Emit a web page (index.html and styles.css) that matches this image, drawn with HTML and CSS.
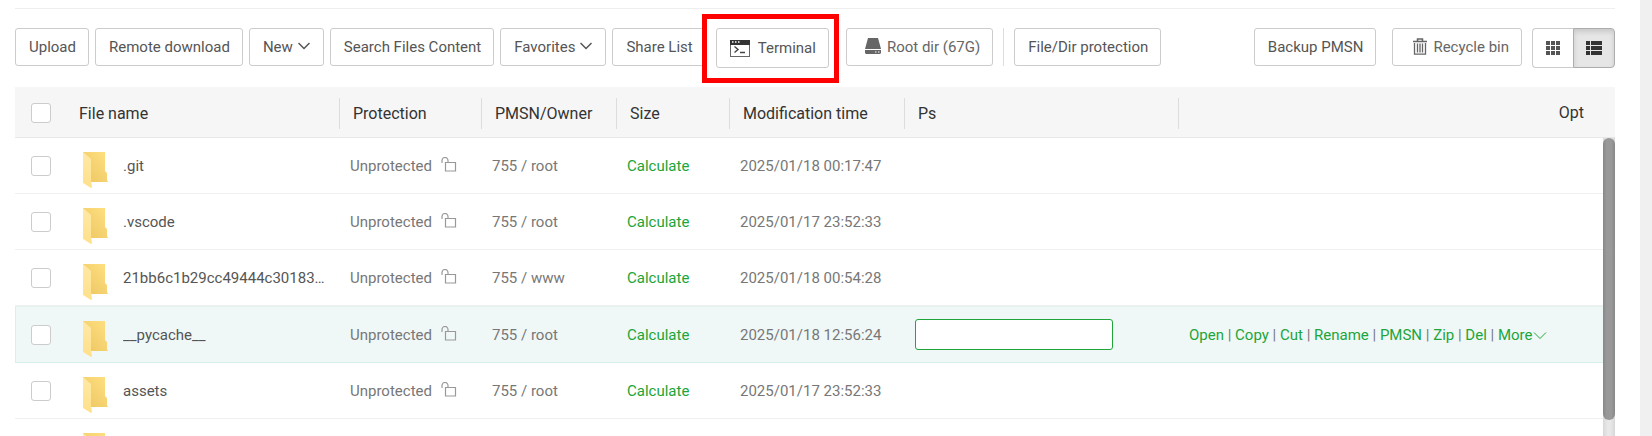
FILE: index.html
```html
<!DOCTYPE html>
<html lang="en">
<head>
<meta charset="utf-8">
<title>Files</title>
<link rel="stylesheet" href="styles.css">
</head>
<body>
<svg class="sprite" aria-hidden="true">
  <defs>
    <linearGradient id="fold-back" x1="0" y1="1" x2="1" y2="0"><stop offset="0" stop-color="#ecc661"/><stop offset="1" stop-color="#ffe082"/></linearGradient>
    <linearGradient id="fold-front" x1="0" y1="0" x2="0" y2="1"><stop offset="0" stop-color="#ffe9a6"/><stop offset="1" stop-color="#ffe08a"/></linearGradient>
    <symbol id="folder" viewBox="0 0 26 38">
      <path d="M0 1h22v19l2 2v7l1 2H8L0 4z" fill="url(#fold-back)"/>
      <path d="M0 1l8 7v22l1 6-1 1-8-5z" fill="url(#fold-front)"/>
    </symbol>
    <symbol id="unlock" viewBox="0 0 16 16">
      <path d="M1 6V3.500a2.500 2.500 0 0 1 6 0V5.500M4.500 5.500h10v8.500h-10z" fill="none" stroke="#999" stroke-width="1.200"/>
    </symbol>
    <symbol id="chevron" viewBox="0 0 12 8">
      <path d="M.5 1L6 6.500 11.500 1" fill="none" stroke="currentColor" stroke-width="1.500"/>
    </symbol>
  </defs>
</svg>
<main class="panel">
  <div class="toolbar">
    <button class="btn">Upload</button>
    <button class="btn">Remote download</button>
    <button class="btn">New <svg class="chevron"><use href="#chevron"/></svg></button>
    <button class="btn">Search Files Content</button>
    <button class="btn">Favorites <svg class="chevron"><use href="#chevron"/></svg></button>
    <button class="btn">Share List</button>
    <div class="callout">
      <button class="btn btn-tall">
        <svg class="icon-term" viewBox="0 0 20 17"><path d="M0 0h20v17H0z" fill="#666"/><path d="M0 0h20v5H0z" fill="#333"/><path d="M1 5h18v11H1z" fill="#fff"/><path d="M2 2h1.500M5 2h1.500M8 2h1.500" stroke="#fff" stroke-width="1.500"/><path d="M4.500 6.500L8 9.500l-3.500 3M10 12.500h5" fill="none" stroke="#444" stroke-width="1.400"/></svg>
        Terminal
      </button>
    </div>
    <button class="btn btn-icon btn-disk">
      <svg class="icon-disk" viewBox="0 0 16 16"><path d="M3 0h10l3 11H0z" fill="#666"/><path d="M0 12h16v3l-1 1H1l-1-1z" fill="#666"/><path d="M10 14h1.500M13 14h1.500" stroke="#fff"/></svg>
      Root dir (67G)
    </button>
    <span class="divider"></span>
    <button class="btn">File/Dir protection</button>
    <div class="tools">
      <button class="btn">Backup PMSN</button>
      <button class="btn btn-icon">
        <svg class="icon-trash" viewBox="0 0 14 17"><path d="M0 3.500h14M4.500 3V1h5v2" fill="none" stroke="#666" stroke-width="1.500"/><path d="M1.500 5v11.200h11V5M4.500 5.500v9M7 5.500v9M9.500 5.500v9" fill="none" stroke="#666" stroke-width="1.300"/></svg>
        Recycle bin
      </button>
      <div class="views">
        <button class="view" aria-label="Grid view"><svg width="14" height="14" viewBox="0 0 14 14"><path d="M0 2h14M0 7h14M0 12h14" stroke="#555" stroke-width="4" stroke-dasharray="4 1"/></svg></button>
        <button class="view view-on" aria-label="List view"><svg width="16" height="14" viewBox="0 0 16 14"><path d="M0 2h4M0 7h4M0 12h4M5 2h11M5 7h11M5 12h11" stroke="#333" stroke-width="4"/></svg></button>
      </div>
    </div>
  </div>

  <table class="files files-head">
    <colgroup><col class="c-check"><col class="c-name"><col class="c-prot"><col class="c-owner"><col class="c-size"><col class="c-time"><col class="c-ps"><col></colgroup>
    <thead>
      <tr>
        <th class="check"><input type="checkbox" aria-label="Select all"></th>
        <th><span class="label">File name</span></th>
        <th><span class="label">Protection</span></th>
        <th><span class="label">PMSN/Owner</span></th>
        <th><span class="label">Size</span></th>
        <th><span class="label">Modification time</span></th>
        <th><span class="label">Ps</span></th>
        <th class="opt">Opt</th>
      </tr>
    </thead>
  </table>

  <div class="body">
    <div class="rows">
      <table class="files">
        <colgroup><col class="c-check"><col class="c-name"><col class="c-prot"><col class="c-owner"><col class="c-size"><col class="c-time"><col class="c-ps"><col></colgroup>
        <tbody>
          <tr>
            <td class="check"><input type="checkbox" aria-label="Select .git"></td>
            <td><div class="name"><svg class="folder"><use href="#folder"/></svg><span class="text">.git</span></div></td>
            <td><div class="prot">Unprotected <svg class="unlock"><use href="#unlock"/></svg></div></td>
            <td>755 / root</td><td><a href="#">Calculate</a></td><td>2025/01/18 00:17:47</td><td></td><td></td>
          </tr>
          <tr>
            <td class="check"><input type="checkbox" aria-label="Select .vscode"></td>
            <td><div class="name"><svg class="folder"><use href="#folder"/></svg><span class="text">.vscode</span></div></td>
            <td><div class="prot">Unprotected <svg class="unlock"><use href="#unlock"/></svg></div></td>
            <td>755 / root</td><td><a href="#">Calculate</a></td><td>2025/01/17 23:52:33</td><td></td><td></td>
          </tr>
          <tr>
            <td class="check"><input type="checkbox" aria-label="Select 21bb6c1b29cc49444c30183"></td>
            <td><div class="name"><svg class="folder"><use href="#folder"/></svg><span class="text">21bb6c1b29cc49444c30183…</span></div></td>
            <td><div class="prot">Unprotected <svg class="unlock"><use href="#unlock"/></svg></div></td>
            <td>755 / www</td><td><a href="#">Calculate</a></td><td>2025/01/18 00:54:28</td><td></td><td></td>
          </tr>
          <tr class="active">
            <td class="check"><input type="checkbox" aria-label="Select __pycache__"></td>
            <td><div class="name"><svg class="folder"><use href="#folder"/></svg><span class="text">__pycache__</span></div></td>
            <td><div class="prot">Unprotected <svg class="unlock"><use href="#unlock"/></svg></div></td>
            <td>755 / root</td><td><a href="#">Calculate</a></td><td>2025/01/18 12:56:24</td>
            <td><input class="note" type="text" aria-label="Ps"></td>
            <td class="actions"><a href="#">Open</a> | <a href="#">Copy</a> | <a href="#">Cut</a> | <a href="#">Rename</a> | <a href="#">PMSN</a> | <a href="#">Zip</a> | <a href="#">Del</a> | <a href="#">More<svg class="more" viewBox="0 0 14 8"><path d="M1 .5l6 6 6-6" fill="none" stroke="currentColor"/></svg></a></td>
          </tr>
          <tr>
            <td class="check"><input type="checkbox" aria-label="Select assets"></td>
            <td><div class="name"><svg class="folder"><use href="#folder"/></svg><span class="text">assets</span></div></td>
            <td><div class="prot">Unprotected <svg class="unlock"><use href="#unlock"/></svg></div></td>
            <td>755 / root</td><td><a href="#">Calculate</a></td><td>2025/01/17 23:52:33</td><td></td><td></td>
          </tr>
          <tr>
            <td class="check"><input type="checkbox" aria-label="Select folder"></td>
            <td><div class="name"><svg class="folder"><use href="#folder"/></svg></div></td>
            <td></td><td></td><td></td><td></td><td></td><td></td>
          </tr>
        </tbody>
      </table>
    </div>
    <div class="track"><div class="thumb"></div></div>
  </div>
</main>
</body>
</html>
```
FILE: styles.css
```css
* { box-sizing: border-box; }
body {
  margin: 0;
  height: 100vh;
  overflow: hidden;
  background: #f0f0f0;
  color: #777;
  font: 15px/20px Roboto, "Liberation Sans", sans-serif;
}
.sprite { position: absolute; width: 0; height: 0; }
.panel {
  height: 100%;
  margin-right: 12px;
  padding: 8px 25px 0 15px;
  background: #fff;
  display: flex;
  flex-direction: column;
}
a { color: #20a53a; text-decoration: none; }

.toolbar {
  flex: none;
  display: flex;
  align-items: flex-start;
  gap: 6px;
  padding: 19px 0;
  border-top: 1px solid #eee;
}
.btn {
  display: flex;
  align-items: center;
  height: 38px;
  padding: 0 12px 0 13px;
  border: 1px solid #ccc;
  border-radius: 3px;
  background: #fff;
  color: #555;
  font: inherit;
  white-space: nowrap;
}
.btn-tall { height: 40px; }
.btn-icon { padding-left: 18px; color: #666; }
.btn-disk { margin-left: 11px; }
.chevron { width: 12px; height: 8px; margin: 0 1px 3px 5px; }
.icon-term { width: 20px; height: 17px; margin-right: 8px; }
.icon-disk { width: 16px; height: 16px; margin: 0 6px 3px 0; }
.icon-trash { width: 14px; height: 17px; margin: 0 6px 2px 2px; }
.callout { position: relative; margin-left: 4px; }
.callout::after {
  content: "";
  position: absolute;
  inset: -14px -10px -15px -14px;
  border: 5px solid #f00;
  pointer-events: none;
}
.divider { width: 1px; height: 38px; margin: 0 4px; background: #ddd; }
.tools { display: flex; gap: 16px; margin-left: auto; }
.views { display: flex; margin-left: -6px; }
.view {
  width: 41px;
  height: 40px;
  display: flex;
  align-items: center;
  justify-content: center;
  padding: 0;
  border: 1px solid #ccc;
  border-right: 0;
  border-radius: 4px 0 0 4px;
  background: #fff;
}
.view-on {
  width: 42px;
  border: 1px solid #adadad;
  border-radius: 0 4px 4px 0;
  background: #e6e6e6;
  box-shadow: inset 0 3px 5px rgba(0, 0, 0, .125);
}

.files { width: 100%; table-layout: fixed; border-collapse: separate; border-spacing: 0; }
.c-check { width: 51px; }
.c-name { width: 274px; }
.c-prot { width: 142px; }
.c-owner { width: 135px; }
.c-size { width: 113px; }
.c-time { width: 175px; }
.c-ps { width: 274px; }
.files-head { flex: none; background: #f6f6f6; color: #333; font-size: 16px; }
th {
  height: 51px;
  padding: 2px 0 0;
  border-bottom: 1px solid #e8e8e8;
  font-weight: 400;
  text-align: left;
}
.label { display: block; padding-left: 13px; border-right: 1px solid #ddd; line-height: 31px; }
th.opt { padding-right: 31px; text-align: right; }
td { height: 56px; padding: 0 10px; border-bottom: 1px solid #f0f0f0; white-space: nowrap; }
.files td.check { padding: 0 0 0 16px; }
.files th.check { padding-left: 16px; }
input[type="checkbox"] {
  appearance: none;
  display: block;
  width: 20px;
  height: 20px;
  margin: 0;
  border: 1px solid #ccc;
  border-radius: 3px;
  background: #fff;
}
.name { display: flex; align-items: center; gap: 14px; padding-left: 7px; color: #555; }
.folder { flex: none; width: 26px; height: 38px; margin-top: 8px; }
.text { overflow: hidden; text-overflow: ellipsis; }
.prot { display: flex; align-items: center; gap: 9px; }
.unlock { width: 16px; height: 16px; margin-bottom: 2px; }
.active td { height: 57px; background: #f0f8f7; border-top: 1px solid #e6f2f0; border-bottom-color: #d9efec; }
.files .active td.check { border-left: 1px solid #d9efec; padding-left: 15px; }
.note {
  display: block;
  width: 198px;
  height: 31px;
  border: 1px solid #20a53a;
  border-radius: 3px;
  background: #fff;
  font: inherit;
}
.more { width: 14px; height: 8px; margin-left: 1px; }

.body { flex: 1; min-height: 0; display: flex; }
.rows { flex: 1; min-width: 0; overflow: hidden; }
.track { width: 12px; background: linear-gradient(90deg, #d8d8d8, #e8e8e8 40%, #e8e8e8 60%, #d8d8d8); }
.thumb { height: 282px; border-radius: 6px; background: linear-gradient(90deg, #888, #999 30%, #999 70%, #888); }
```
